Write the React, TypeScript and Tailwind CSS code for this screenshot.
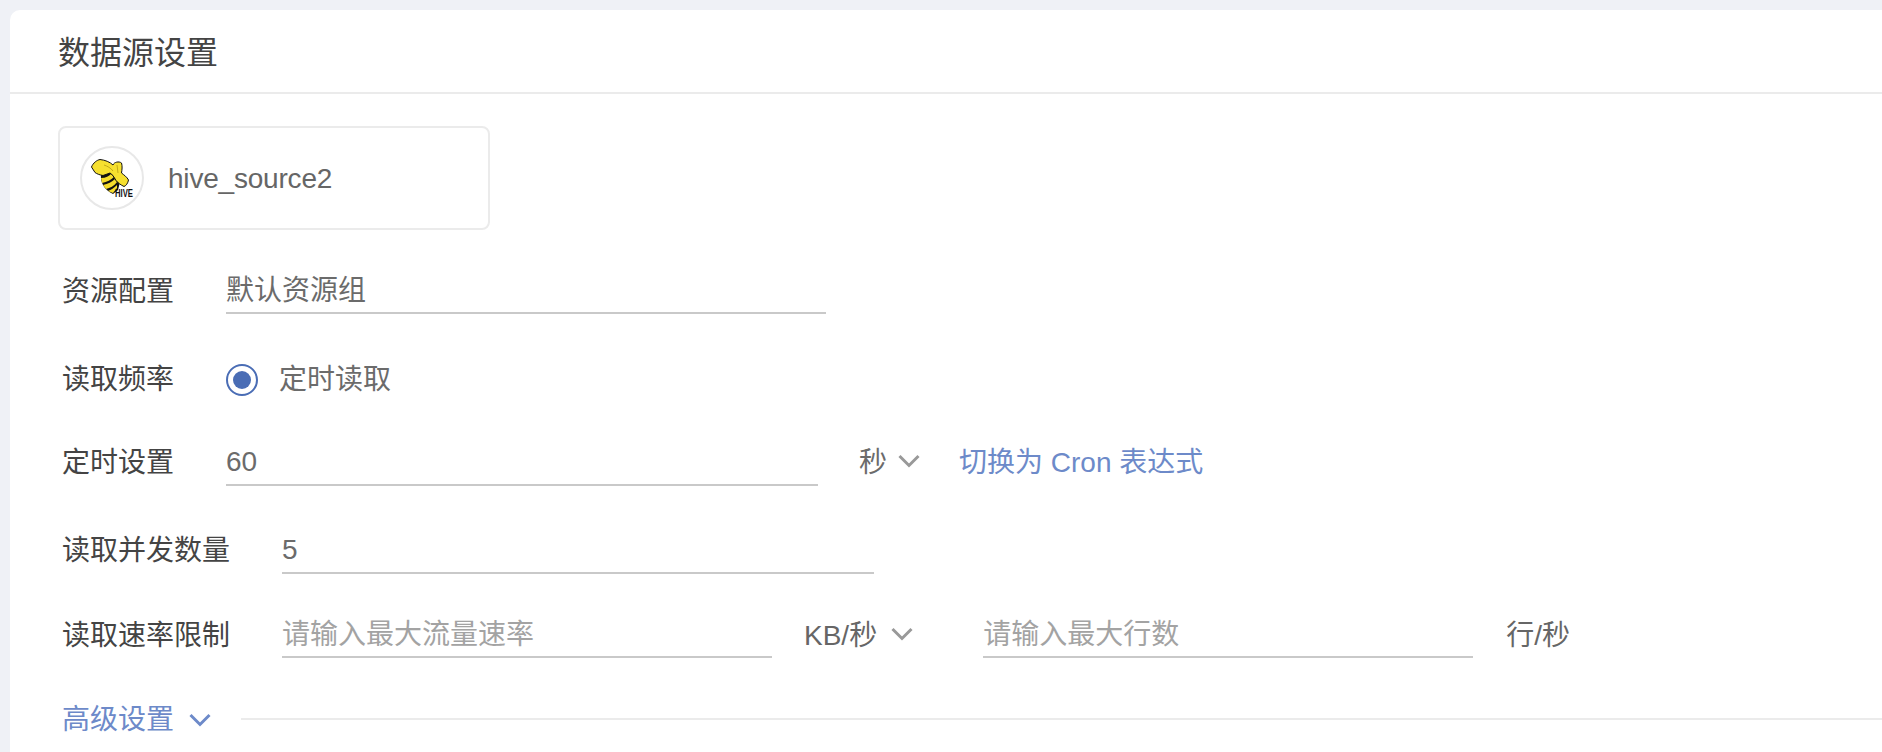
const fontStack = "font-['Liberation_Sans','Noto_Sans_CJK_SC',sans-serif]";

const Chevron = ({ className }: { className: string }) => (
  <svg viewBox="0 0 22 14" fill="none" className={className}>
    <path d="M1.5 2 L11 11.5 L20.5 2" stroke="currentColor" strokeWidth="3" />
  </svg>
);

const HiveLogo = () => (
  <svg viewBox="0 0 64 64" className="w-[64px] h-[64px]">
    <circle cx="32" cy="32" r="31" fill="#fff" stroke="#e8e8e8" strokeWidth="2" />
    {/* body stripes */}
    <path d="M21 28 C20 36 24 44 33 48 L38 44 L40 36 L32 26 Z" fill="#111" />
    <path d="M21 32 C26 32 29 30 31 28 L34 31 C31 34 27 36 22 37 Z" fill="#f5dc2c" />
    <path d="M23 39 C28 38 32 36 35 33 L37 36 C34 40 30 42 26 43 Z" fill="#f5dc2c" />
    <path d="M28 45 C31 44 34 42 37 39 L37 42 L33 47 Z" fill="#f5dc2c" />
    {/* head and wing */}
    <path
      d="M11.5 21 C13 17 17 14 20 13.5 C25 14 30 16 33 19 C34 16 39 15 41.5 17 C42.5 20 42 24 41.5 27 C44 29 47 31 48.5 34 C48 37 46 40 44 40.5 C41 39 38 37 36 34.5 C34 31 32 28 30 27 L23 29.5 C20 29 17 28 15 26.5 Z"
      fill="#f6e02f"
      stroke="#111"
      strokeWidth="1"
      strokeLinejoin="round"
    />
    <path d="M24 19 C27 20 31 22 33 25 M37 19 L38 27" stroke="#b59c12" strokeWidth="0.8" fill="none" />
    <text
      x="35"
      y="51"
      fontSize="10"
      fontWeight="700"
      fill="#111"
      textLength="18"
      lengthAdjust="spacingAndGlyphs"
      fontFamily="'Liberation Sans',sans-serif"
    >
      HIVE
    </text>
  </svg>
);

const Label = ({ children, width }: { children: string; width: string }) => (
  <div className={`${width} shrink-0 text-[#444444]`}>{children}</div>
);

const Field = ({
  value,
  placeholder,
  width,
  height = "h-[44px]",
}: {
  value?: string;
  placeholder?: string;
  width: string;
  height?: string;
}) => (
  <div className={`${width} ${height} shrink-0 border-b-2 border-[#c9c9c9] flex items-center`}>
    {value ? (
      <span className="text-[#6b6b6b]">{value}</span>
    ) : (
      <span className="text-[#a3a3a3]">{placeholder}</span>
    )}
  </div>
);

export default function App() {
  return (
    <div className={`w-[1882px] h-[752px] overflow-hidden bg-[#eff1f6] pt-[10px] pl-[10px] ${fontStack} text-[28px] leading-[40px]`}>
      <div className="bg-white rounded-tl-[10px] h-[742px]">
        <div className="h-[84px] border-b-2 border-[#ebebeb] pl-[48px] pt-[20px] text-[32px] leading-[46px] text-[#444444]">
          数据源设置
        </div>

        <div className="pl-[48px] pt-[32px]">
          <div className="w-[432px] h-[104px] border-2 border-[#ebebeb] rounded-[8px] flex items-center pl-[20px] gap-[24px]">
            <HiveLogo />
            <span className="text-[#666666] tracking-[-0.2px] pt-[2px]">hive_source2</span>
          </div>

          <div className="flex items-center mt-[40px] pl-[4px]">
            <Label width="w-[164px]">资源配置</Label>
            <Field value="默认资源组" width="w-[600px]" />
          </div>

          <div className="flex items-center mt-[46px] pl-[4px] h-[40px]">
            <Label width="w-[164px]">读取频率</Label>
            <div className="w-[32px] h-[32px] rounded-full border-2 border-[#4a6db5] flex items-center justify-center">
              <div className="w-[18px] h-[18px] rounded-full bg-[#4a6db5]" />
            </div>
            <span className="ml-[21px] text-[#6b6b6b]">定时读取</span>
          </div>

          <div className="flex items-center mt-[40px] pl-[4px]">
            <Label width="w-[164px]">定时设置</Label>
            <Field value="60" width="w-[592px]" height="h-[46px]" />
            <span className="ml-[41px] text-[#6b6b6b]">秒</span>
            <Chevron className="ml-[11px] mb-[5px] w-[22px] h-[14px] text-[#999999]" />
            <span className="ml-[39px] text-[#6d8ac9]">切换为 Cron 表达式</span>
          </div>

          <div className="flex items-center mt-[42px] pl-[4px]">
            <Label width="w-[220px]">读取并发数量</Label>
            <Field value="5" width="w-[592px]" height="h-[46px]" />
          </div>

          <div className="flex items-center mt-[40px] pl-[4px]">
            <Label width="w-[220px]">读取速率限制</Label>
            <Field placeholder="请输入最大流量速率" width="w-[490px]" />
            <span className="ml-[32px] text-[#666666]">KB/秒</span>
            <Chevron className="ml-[14px] mb-[4px] w-[22px] h-[14px] text-[#999999]" />
            <div className="ml-[70px]">
              <Field placeholder="请输入最大行数" width="w-[490px]" />
            </div>
            <span className="ml-[33px] text-[#666666]">行/秒</span>
          </div>

          <div className="flex items-center mt-[40px] pl-[4px]">
            <span className="text-[#6d8ac9] pt-[2px]">高级设置</span>
            <Chevron className="ml-[15px] mt-[2px] w-[22px] h-[14px] text-[#6d8ac9]" />
            <div className="ml-[30px] flex-1 h-[2px] bg-[#ebebeb]" />
          </div>
        </div>
      </div>
    </div>
  );
}
